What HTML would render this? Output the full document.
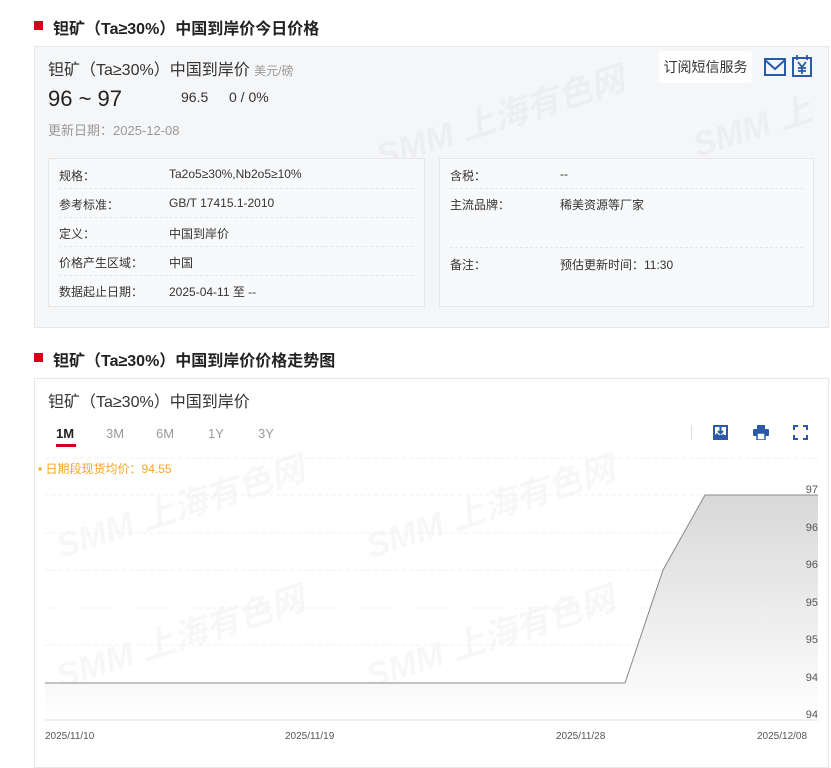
<!DOCTYPE html>
<html><head><meta charset="utf-8"><style>
*{margin:0;padding:0;box-sizing:border-box}
body{width:831px;height:763px;background:#fff;font-family:"Liberation Sans","Noto Sans CJK SC",sans-serif;color:#333;position:relative;overflow:hidden}
.a{position:absolute;white-space:nowrap}
.h{font-size:16px;font-weight:bold;color:#222}
.sq{position:absolute;width:9px;height:9px;background:#d0021b}
.lbl{font-size:12px;color:#333}
.row{position:absolute;left:10px;right:10px;border-bottom:1px dashed #e6e6e6;height:29px}
.wm{position:absolute;font-size:34px;font-weight:bold;color:rgba(0,0,0,0.03);transform:rotate(-18deg);font-style:italic;white-space:nowrap}
</style></head><body>
<div class="sq" style="left:34px;top:21px"></div>
<div class="a h" style="left:53px;top:15px">钽矿（Ta≥30%）中国到岸价今日价格</div>
<div class="a" style="left:34px;top:46px;width:795px;height:282px;background:#f5f6f8;border:1px solid #e8e8e8"></div>
<div class="wm" style="left:370px;top:90px">SMM 上海有色网</div>
<div class="wm" style="left:690px;top:100px">SMM 上</div>
<div class="a" style="left:48px;top:56px;font-size:16px;color:#333">钽矿（Ta≥30%）中国到岸价 <span style="font-size:12px;color:#999">美元/磅</span></div>
<div class="a" style="left:48px;top:86px;font-size:22px;color:#222">96 ~ 97</div>
<div class="a" style="left:181px;top:89px;font-size:14px;color:#333">96.5</div>
<div class="a" style="left:229px;top:89px;font-size:14px;color:#333">0 / 0%</div>
<div class="a" style="left:48px;top:120px;font-size:13px;color:#999">更新日期：2025-12-08</div>
<div class="a" style="left:659px;top:51px;width:93px;height:32px;background:#fff;border-radius:3px;font-size:14px;line-height:32px;text-align:center;color:#333">订阅短信服务</div>
<svg class="a" style="left:764px;top:57px" width="22" height="20" viewBox="0 0 22 20"><rect x="1" y="2" width="20" height="16" fill="none" stroke="#2a5aa8" stroke-width="2"/><path d="M1 3 L11 12 L21 3" fill="none" stroke="#2a5aa8" stroke-width="2"/></svg>
<svg class="a" style="left:792px;top:55px" width="20" height="22" viewBox="0 0 20 22"><rect x="1" y="3" width="18" height="18" fill="none" stroke="#2a5aa8" stroke-width="2"/><path d="M5 0v5M15 0v5M6 7l4 5 4-5M10 12v7M6 13h8M6 16h8" fill="none" stroke="#2a5aa8" stroke-width="1.8"/></svg>
<div class="a" style="left:48px;top:158px;width:377px;height:149px;background:#f8f9fa;border:1px solid #e6e6e6">
<div class="row" style="top:1px"><span class="a lbl" style="left:0;top:7px">规格：</span><span class="a lbl" style="left:110px;top:7px">Ta2o5≥30%,Nb2o5≥10%</span></div>
<div class="row" style="top:30px"><span class="a lbl" style="left:0;top:7px">参考标准：</span><span class="a lbl" style="left:110px;top:7px">GB/T 17415.1-2010</span></div>
<div class="row" style="top:59px"><span class="a lbl" style="left:0;top:7px">定义：</span><span class="a lbl" style="left:110px;top:7px">中国到岸价</span></div>
<div class="row" style="top:88px"><span class="a lbl" style="left:0;top:7px">价格产生区域：</span><span class="a lbl" style="left:110px;top:7px">中国</span></div>
<div class="row" style="top:117px;border:none"><span class="a lbl" style="left:0;top:7px">数据起止日期：</span><span class="a lbl" style="left:110px;top:7px">2025-04-11 至 --</span></div>
</div>
<div class="a" style="left:439px;top:158px;width:375px;height:149px;background:#f8f9fa;border:1px solid #e6e6e6">
<div class="row" style="top:1px"><span class="a lbl" style="left:0;top:7px">含税：</span><span class="a lbl" style="left:110px;top:7px">--</span></div>
<div class="row" style="top:30px;height:59px"><span class="a lbl" style="left:0;top:7px">主流品牌：</span><span class="a lbl" style="left:110px;top:7px">稀美资源等厂家</span></div>
<div class="row" style="top:89px;border:none"><span class="a lbl" style="left:0;top:8px">备注：</span><span class="a lbl" style="left:110px;top:8px">预估更新时间：11:30</span></div>
</div>

<div class="sq" style="left:34px;top:353px"></div>
<div class="a h" style="left:53px;top:347px">钽矿（Ta≥30%）中国到岸价价格走势图</div>
<div class="a" style="left:34px;top:378px;width:795px;height:390px;background:#fff;border:1px solid #e8e8e8"></div>
<div class="a" style="left:48px;top:388px;font-size:16px;color:#333">钽矿（Ta≥30%）中国到岸价</div>
<div class="a" style="left:56px;top:426px;font-size:13px;font-weight:bold;color:#222">1M</div>
<div class="a" style="left:56px;top:444px;width:20px;height:3px;background:#d0021b"></div>
<div class="a" style="left:106px;top:426px;font-size:13px;color:#999">3M</div>
<div class="a" style="left:156px;top:426px;font-size:13px;color:#999">6M</div>
<div class="a" style="left:208px;top:426px;font-size:13px;color:#999">1Y</div>
<div class="a" style="left:258px;top:426px;font-size:13px;color:#999">3Y</div>
<div class="a" style="left:691px;top:425px;width:1px;height:15px;background:#ddd"></div>
<svg class="a" style="left:713px;top:425px" width="15" height="15" viewBox="0 0 15 15"><rect x="0" y="0" width="15" height="15" fill="#2a5aa8"/><rect x="2" y="2" width="11" height="8" fill="#fff"/><path d="M7.5 2v6M5 6l2.5 2.5L10 6" stroke="#2a5aa8" stroke-width="2" fill="none"/><path d="M0 12l4-4 3 3 3-2 5 4z" fill="#2a5aa8"/></svg>
<svg class="a" style="left:753px;top:425px" width="16" height="15" viewBox="0 0 16 15"><rect x="4" y="0" width="8" height="4" fill="#2a5aa8"/><rect x="0" y="4" width="16" height="7" rx="1" fill="#2a5aa8"/><rect x="4" y="8" width="8" height="7" fill="#fff" stroke="#2a5aa8" stroke-width="1.5"/></svg>
<svg class="a" style="left:793px;top:425px" width="15" height="15" viewBox="0 0 15 15"><path d="M1 5V1h4M10 1h4v4M14 10v4h-4M5 14H1v-4" fill="none" stroke="#2a5aa8" stroke-width="2"/></svg>
<div class="a" style="left:38px;top:460px;font-size:12px;color:#f5a623">• 日期段现货均价：94.55</div>
<div class="wm" style="left:50px;top:480px">SMM 上海有色网</div>
<div class="wm" style="left:360px;top:480px">SMM 上海有色网</div>
<div class="wm" style="left:50px;top:610px">SMM 上海有色网</div>
<div class="wm" style="left:360px;top:610px">SMM 上海有色网</div>
<svg class="a" style="left:0;top:0" width="831" height="763">
<defs><linearGradient id="g" x1="0" y1="495" x2="0" y2="720" gradientUnits="userSpaceOnUse"><stop offset="0" stop-color="#d8d8d8"/><stop offset="1" stop-color="#fff"/></linearGradient></defs>
<g stroke="#f0f0f0" stroke-dasharray="4,3">
<line x1="45" y1="458" x2="818" y2="458"/><line x1="45" y1="495" x2="818" y2="495"/><line x1="45" y1="533" x2="818" y2="533"/><line x1="45" y1="570" x2="818" y2="570"/><line x1="45" y1="608" x2="818" y2="608"/><line x1="45" y1="645" x2="818" y2="645"/><line x1="45" y1="683" x2="818" y2="683"/></g>
<path d="M45 683H625L663 570L705 495H818V720H45Z" fill="url(#g)"/>
<path d="M45 683H625L663 570L705 495H818" fill="none" stroke="#888" stroke-width="1"/>
<line x1="45" y1="720" x2="818" y2="720" stroke="#e0e0e0"/>
<g font-size="11" fill="#555" text-anchor="end" font-family="Liberation Sans">
<text x="818" y="493">97</text><text x="818" y="531">96</text><text x="818" y="568">96</text><text x="818" y="606">95</text><text x="818" y="643">95</text><text x="818" y="681">94</text><text x="818" y="718">94</text></g>
<g font-size="10" fill="#555" font-family="Liberation Sans">
<text x="45" y="739">2025/11/10</text><text x="285" y="739">2025/11/19</text><text x="556" y="739">2025/11/28</text><text x="757" y="739">2025/12/08</text></g>
</svg>
</body></html>
